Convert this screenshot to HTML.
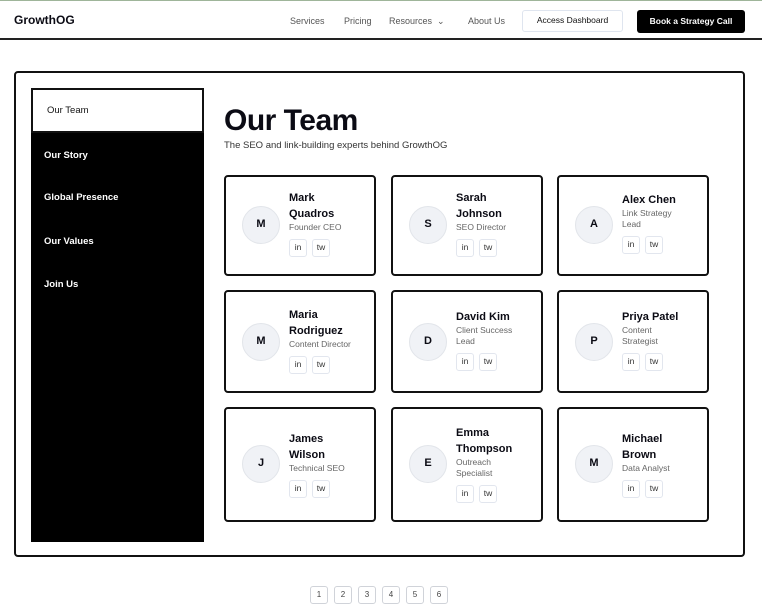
<!DOCTYPE html>
<html><head><meta charset="utf-8"><style>
*{box-sizing:border-box;margin:0;padding:0}
body{width:762px;height:614px;background:#fff;font-family:"Liberation Sans",sans-serif;position:relative;overflow:hidden;color:#0b0b14}
.topline{position:absolute;left:0;top:0;width:762px;height:1px;background:#9fb59a}
.hdr{position:absolute;left:0;top:1px;width:762px;height:39px;border-bottom:2px solid #222}
.logo{position:absolute;left:14px;top:12px;font-weight:bold;font-size:12px}
.nav{position:absolute;top:15px;font-size:9px;color:#555}
.btn1{position:absolute;left:522px;top:9px;width:101px;height:22px;border:1.5px solid #dfe5ef;border-radius:3px;font-size:8.5px;text-align:center;line-height:19px;color:#111}
.btn2{position:absolute;left:637px;top:9px;width:108px;height:23px;background:#000;color:#fff;border-radius:3px;font-size:8.5px;font-weight:bold;text-align:center;line-height:23px}
.outer{position:absolute;left:14px;top:71px;width:731px;height:486px;border:2px solid #111;border-radius:4px}
.side{position:absolute;left:31px;top:88px;width:173px;height:454px;background:#000}
.side .act{position:absolute;left:0;top:0;width:173px;height:45px;background:#fff;border:2px solid #111;font-size:9.5px;padding:15px 0 0 14px;color:#111}
.side .it{position:absolute;left:13px;color:#fff;font-size:9.5px;font-weight:bold}
h1{position:absolute;left:224px;top:104px;font-size:30px;font-weight:bold;letter-spacing:-0.5px}
.sub{position:absolute;left:224px;top:140px;font-size:9.5px;color:#333}
.card{position:absolute;width:152px;border:2px solid #111;border-radius:4px;display:flex;align-items:center}
.av{position:absolute;left:16px;width:38px;height:38px;border-radius:50%;background:#f0f2f6;border:1.5px solid #e2e5ea;font-weight:bold;font-size:11px;text-align:center;line-height:35px}
.tx{position:absolute;left:63px;white-space:nowrap}
.nm{font-weight:bold;font-size:11px;line-height:16px}
.rl{font-size:8.5px;color:#666;line-height:11px}
.so{margin-top:6px;display:flex;gap:5px}
.so span{width:18px;height:18px;border:1.5px solid #e2e6ee;border-radius:3px;font-size:8.5px;text-align:center;line-height:15px;color:#333}
.pg{position:absolute;top:586px;width:18px;height:18px;border:1.5px solid #d0d3d9;border-radius:3px;font-size:8px;text-align:center;line-height:15px;color:#444}
</style></head><body>
<div class="topline"></div>
<div class="hdr">
<div class="logo">GrowthOG</div>
<div class="nav" style="left:290px">Services</div>
<div class="nav" style="left:344px">Pricing</div>
<div class="nav" style="left:389px">Resources &nbsp;⌄</div>
<div class="nav" style="left:468px">About Us</div>
<div class="btn1">Access Dashboard</div>
<div class="btn2">Book a Strategy Call</div>
</div>
<div class="outer"></div>
<div class="side">
<div class="act">Our Team</div>
<div class="it" style="top:62px">Our Story</div>
<div class="it" style="top:104px">Global Presence</div>
<div class="it" style="top:148px">Our Values</div>
<div class="it" style="top:191px">Join Us</div>
</div>
<h1>Our Team</h1>
<div class="sub">The SEO and link-building experts behind GrowthOG</div>

<div class="card" style="left:224px;top:175px;height:101px"><div class="av" style="top:29px">M</div><div class="tx" style="top:13px"><div class="nm">Mark<br>Quadros</div><div class="rl">Founder CEO</div><div class="so"><span>in</span><span>tw</span></div></div></div>
<div class="card" style="left:391px;top:175px;height:101px"><div class="av" style="top:29px">S</div><div class="tx" style="top:13px"><div class="nm">Sarah<br>Johnson</div><div class="rl">SEO Director</div><div class="so"><span>in</span><span>tw</span></div></div></div>
<div class="card" style="left:557px;top:175px;height:101px"><div class="av" style="top:29px">A</div><div class="tx" style="top:15px"><div class="nm">Alex Chen</div><div class="rl">Link Strategy<br>Lead</div><div class="so"><span>in</span><span>tw</span></div></div></div>

<div class="card" style="left:224px;top:290px;height:103px"><div class="av" style="top:31px">M</div><div class="tx" style="top:15px"><div class="nm">Maria<br>Rodriguez</div><div class="rl">Content Director</div><div class="so"><span>in</span><span>tw</span></div></div></div>
<div class="card" style="left:391px;top:290px;height:103px"><div class="av" style="top:31px">D</div><div class="tx" style="top:17px"><div class="nm">David Kim</div><div class="rl">Client Success<br>Lead</div><div class="so"><span>in</span><span>tw</span></div></div></div>
<div class="card" style="left:557px;top:290px;height:103px"><div class="av" style="top:31px">P</div><div class="tx" style="top:17px"><div class="nm">Priya Patel</div><div class="rl">Content<br>Strategist</div><div class="so"><span>in</span><span>tw</span></div></div></div>

<div class="card" style="left:224px;top:407px;height:115px"><div class="av" style="top:36px">J</div><div class="tx" style="top:22px"><div class="nm">James<br>Wilson</div><div class="rl">Technical SEO</div><div class="so"><span>in</span><span>tw</span></div></div></div>
<div class="card" style="left:391px;top:407px;height:115px"><div class="av" style="top:36px">E</div><div class="tx" style="top:16px"><div class="nm">Emma<br>Thompson</div><div class="rl">Outreach<br>Specialist</div><div class="so"><span>in</span><span>tw</span></div></div></div>
<div class="card" style="left:557px;top:407px;height:115px"><div class="av" style="top:36px">M</div><div class="tx" style="top:22px"><div class="nm">Michael<br>Brown</div><div class="rl">Data Analyst</div><div class="so"><span>in</span><span>tw</span></div></div></div>

<div class="pg" style="left:310px">1</div>
<div class="pg" style="left:334px">2</div>
<div class="pg" style="left:358px">3</div>
<div class="pg" style="left:382px">4</div>
<div class="pg" style="left:406px">5</div>
<div class="pg" style="left:430px">6</div>
</body></html>
